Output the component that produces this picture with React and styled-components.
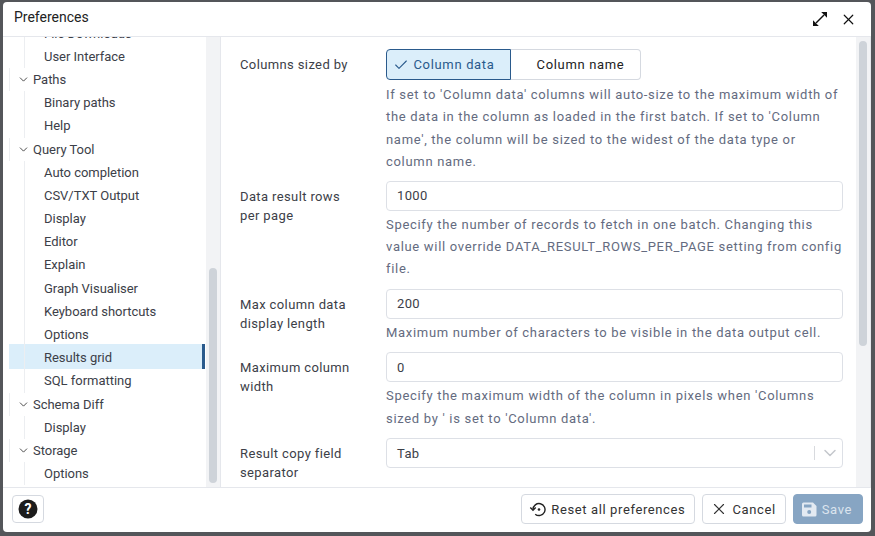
import React from "react";
import styled, { createGlobalStyle } from "styled-components";
import { ChevronDown, Check, X } from "lucide-react";

const GlobalStyle = createGlobalStyle`
  html, body {
    margin: 0;
    height: 100%;
    background: #54565a;
    font-family: Roboto, "Liberation Sans", sans-serif;
    overflow: hidden;
  }
`;

const Backdrop = styled.div`
  width: 875px;
  height: 536px;
  padding: 2px 4px 4px 3px;
  box-sizing: border-box;
`;

const Dialog = styled.div`
  height: 100%;
  background: #fff;
  border-radius: 4px;
  display: flex;
  flex-direction: column;
  overflow: hidden;
`;

const TitleBar = styled.div`
  height: 34px;
  flex: none;
  display: flex;
  align-items: center;
  padding: 0 14px 0 11px;
  border-bottom: 1px solid #e5e7ec;
  color: #222;
  font-size: 14px;
`;

const TitleText = styled.div`
  flex: 1;
  padding-bottom: 4px;
`;

const TitleIcons = styled.div`
  display: flex;
  align-items: center;
  gap: 12px;
`;

const Body = styled.div`
  flex: 1;
  min-height: 0;
  display: flex;
`;

const Sidebar = styled.div`
  width: 203px;
  flex: none;
  overflow: hidden;
`;

const TreeList = styled.div`
  margin-top: -15.4px;
  padding-left: 6px;
  isolation: isolate;
`;

const Row = styled.div`
  height: 23.2px;
  line-height: 23.2px;
  font-size: 13px;
  letter-spacing: -0.03px;
  color: #3c4048;
  display: flex;
  align-items: center;
  position: relative;
  padding-left: ${(p) => (p.$group ? "8px" : "35px")};

  &::before {
    content: "";
    position: absolute;
    top: 0;
    bottom: 0;
    left: ${(p) => (p.$group ? "0" : "15px")};
    width: 1px;
    background: #eceef1;
  }

  &::after {
    content: "";
    display: ${(p) => (p.$active ? "block" : "none")};
    position: absolute;
    z-index: -1;
    top: -2px;
    bottom: 0;
    left: 0;
    right: 1px;
    background: #dbeefa;
    border-right: 3px solid #2a5a8c;
  }
`;

const GroupChevron = styled(ChevronDown)`
  margin-right: 3px;
  flex: none;
  color: #333;
`;

const ScrollTrack = styled.div`
  flex: none;
  width: 15px;
  background: #f2f3f5;
  border-right: 1px solid #e5e7ec;
  display: flex;
  justify-content: center;
  align-items: ${(p) => (p.$top ? "flex-start" : "flex-end")};
  padding: ${(p) => (p.$top ? "4px 0 0" : "0 0 4px")};
  box-sizing: border-box;
`;

const ScrollThumb = styled.div`
  width: 8px;
  height: ${(p) => p.$height}px;
  background: #ced3d9;
  border-radius: 4px;
`;

const Form = styled.div`
  flex: 1;
  min-width: 0;
  overflow: hidden;
  padding: 12px 16px 0 19px;
`;

const Field = styled.div`
  display: grid;
  grid-template-columns: 146px 457px;
  margin-bottom: ${(p) => p.$gap || 0}px;
`;

const Label = styled.div`
  font-size: 13px;
  line-height: 19px;
  letter-spacing: 0.38px;
  color: #3c4048;
  padding-top: 6px;
  width: 120px;
`;

const Help = styled.div`
  font-size: 13px;
  line-height: 22.4px;
  letter-spacing: 0.69px;
  color: #646b80;
  margin-top: 3px;
`;

const Toggle = styled.div`
  display: flex;
  width: 255px;
  height: 31px;
  margin-bottom: 4px;
`;

const ToggleButton = styled.div`
  box-sizing: border-box;
  display: flex;
  align-items: center;
  justify-content: center;
  gap: 5px;
  font-size: 13px;
  letter-spacing: 0.66px;
  width: ${(p) => (p.$on ? "125px" : "130px")};
  padding: ${(p) => (p.$on ? "0 10px 0 0" : "0 0 0 10px")};
  color: ${(p) => (p.$on ? "#2a5a8c" : "#222")};
  background: ${(p) => (p.$on ? "#dbeefa" : "#fff")};
  border: 1px solid ${(p) => (p.$on ? "#2a5a8c" : "#d5d9e0")};
  border-left-width: ${(p) => (p.$on ? "1px" : "0")};
  border-radius: ${(p) => (p.$on ? "4px 0 0 4px" : "0 4px 4px 0")};
`;

const Input = styled.div`
  box-sizing: border-box;
  height: 30px;
  border: 1px solid #dde0e6;
  border-radius: 4px;
  padding: 0 10px;
  display: flex;
  align-items: center;
  justify-content: space-between;
  font-size: 13px;
  letter-spacing: 0.35px;
  color: #3c4048;
`;

const SelectArrow = styled.div`
  display: flex;
  align-items: center;
  border-left: 1px solid #d8dade;
  height: 14px;
  padding-left: 5px;
  margin-right: -8px;
  color: #c4c7cc;
`;

const Footer = styled.div`
  height: 45px;
  flex: none;
  box-sizing: border-box;
  border-top: 1px solid #e5e7ec;
  display: flex;
  align-items: center;
  justify-content: space-between;
  padding: 0 8px 2px 9px;
`;

const HelpButton = styled.div`
  box-sizing: border-box;
  width: 32px;
  height: 28px;
  border: 1px solid #d5d9e0;
  border-radius: 4px;
  display: flex;
  align-items: center;
  justify-content: center;
`;

const Actions = styled.div`
  display: flex;
  gap: 7px;
`;

const Action = styled.div`
  box-sizing: border-box;
  height: 30px;
  padding: 0 ${(p) => (p.$primary ? "10px" : "9px")} 0 7px;
  display: flex;
  align-items: center;
  gap: 4px;
  font-size: 13px;
  letter-spacing: 0.62px;
  border-radius: 4px;
  color: ${(p) => (p.$primary ? "#dbe4ee" : "#333")};
  background: ${(p) => (p.$primary ? "#87a5c3" : "#fff")};
  border: 1px solid ${(p) => (p.$primary ? "#87a5c3" : "#d5d9e0")};
`;

const tree = [
  { label: "File Downloads" },
  { label: "User Interface" },
  { label: "Paths", group: true },
  { label: "Binary paths" },
  { label: "Help" },
  { label: "Query Tool", group: true },
  { label: "Auto completion" },
  { label: "CSV/TXT Output" },
  { label: "Display" },
  { label: "Editor" },
  { label: "Explain" },
  { label: "Graph Visualiser" },
  { label: "Keyboard shortcuts" },
  { label: "Options" },
  { label: "Results grid", active: true },
  { label: "SQL formatting" },
  { label: "Schema Diff", group: true },
  { label: "Display" },
  { label: "Storage", group: true },
  { label: "Options" },
];

const ExpandIcon = () => (
  <svg width="16" height="16" viewBox="0 0 16 16" fill="#111">
    <path d="M15 1H9.200L15 6.800z" />
    <path d="M1 15H6.800L1 9.200z" />
    <path d="M4 12l8-8" stroke="#111" strokeWidth="1.400" />
  </svg>
);

const HelpIcon = () => (
  <svg width="20" height="20" viewBox="0 0 20 20">
    <circle cx="10" cy="10" r="9.500" fill="#1c1c1c" />
    <text
      x="10"
      y="15"
      textAnchor="middle"
      fontSize="14"
      fontWeight="700"
      fontFamily="Roboto, sans-serif"
      fill="#fff"
    >
      ?
    </text>
  </svg>
);

const ResetIcon = () => (
  <svg width="18" height="18" viewBox="0 0 18 18" fill="none" stroke="#222" strokeWidth="1.400">
    <path d="M4 9.500a6 6 0 1 1 2.200 4.700" />
    <path d="M1.300 7.500L4 10.300l2.700-2.800" />
    <circle cx="10" cy="9.500" r="1.300" fill="#222" stroke="none" />
  </svg>
);

const SaveIcon = () => (
  <svg width="17" height="17" viewBox="0 0 17 17">
    <path
      d="M2.500 1.500h9.500l3.500 3.500v9a1.500 1.500 0 0 1-1.500 1.500H2.500A1.500 1.500 0 0 1 1 14V3a1.500 1.500 0 0 1 1.500-1.500z"
      fill="#e3eaf2"
    />
    <rect x="3" y="3.500" width="7.500" height="3" fill="#87a5c3" />
    <circle cx="8.200" cy="11" r="2" fill="#87a5c3" />
  </svg>
);

const App = () => {
  return (
    <Backdrop>
      <GlobalStyle />
      <Dialog>
        <TitleBar>
          <TitleText>Preferences</TitleText>
          <TitleIcons>
            <ExpandIcon />
            <X size={17} color="#111" strokeWidth={1.7} />
          </TitleIcons>
        </TitleBar>
        <Body>
          <Sidebar>
            <TreeList>
              {tree.map((item, idx) => (
                <Row key={idx} $group={item.group} $active={item.active}>
                  {item.group && <GroupChevron size={13} strokeWidth={1.6} />}
                  {item.label}
                </Row>
              ))}
            </TreeList>
          </Sidebar>
          <ScrollTrack>
            <ScrollThumb $height={215} />
          </ScrollTrack>
          <Form>
            <Field $gap={7}>
              <Label>Columns sized by</Label>
              <div>
                <Toggle>
                  <ToggleButton $on>
                    <Check size={16} strokeWidth={1.6} />
                    Column data
                  </ToggleButton>
                  <ToggleButton>Column name</ToggleButton>
                </Toggle>
                <Help>
                  If set to 'Column data' columns will auto-size to the maximum
                  width of the data in the column as loaded in the first batch.
                  If set to 'Column name', the column will be sized to the
                  widest of the data type or column name.
                </Help>
              </div>
            </Field>
            <Field $gap={8}>
              <Label>Data result rows per page</Label>
              <div>
                <Input>1000</Input>
                <Help>
                  Specify the number of records to fetch in one batch. Changing
                  this value will override DATA_RESULT_ROWS_PER_PAGE setting
                  from config file.
                </Help>
              </div>
            </Field>
            <Field $gap={8}>
              <Label>Max column data display length</Label>
              <div>
                <Input>200</Input>
                <Help>
                  Maximum number of characters to be visible in the data output
                  cell.
                </Help>
              </div>
            </Field>
            <Field $gap={8}>
              <Label>Maximum column width</Label>
              <div>
                <Input>0</Input>
                <Help>
                  Specify the maximum width of the column in pixels when
                  'Columns sized by ' is set to 'Column data'.
                </Help>
              </div>
            </Field>
            <Field>
              <Label>Result copy field separator</Label>
              <Input>
                Tab
                <SelectArrow>
                  <ChevronDown size={20} strokeWidth={1.8} />
                </SelectArrow>
              </Input>
            </Field>
          </Form>
          <ScrollTrack $top>
            <ScrollThumb $height={305} />
          </ScrollTrack>
        </Body>
        <Footer>
          <HelpButton>
            <HelpIcon />
          </HelpButton>
          <Actions>
            <Action>
              <ResetIcon />
              Reset all preferences
            </Action>
            <Action>
              <X size={18} strokeWidth={1.5} />
              Cancel
            </Action>
            <Action $primary>
              <SaveIcon />
              Save
            </Action>
          </Actions>
        </Footer>
      </Dialog>
    </Backdrop>
  );
};

export default App;
